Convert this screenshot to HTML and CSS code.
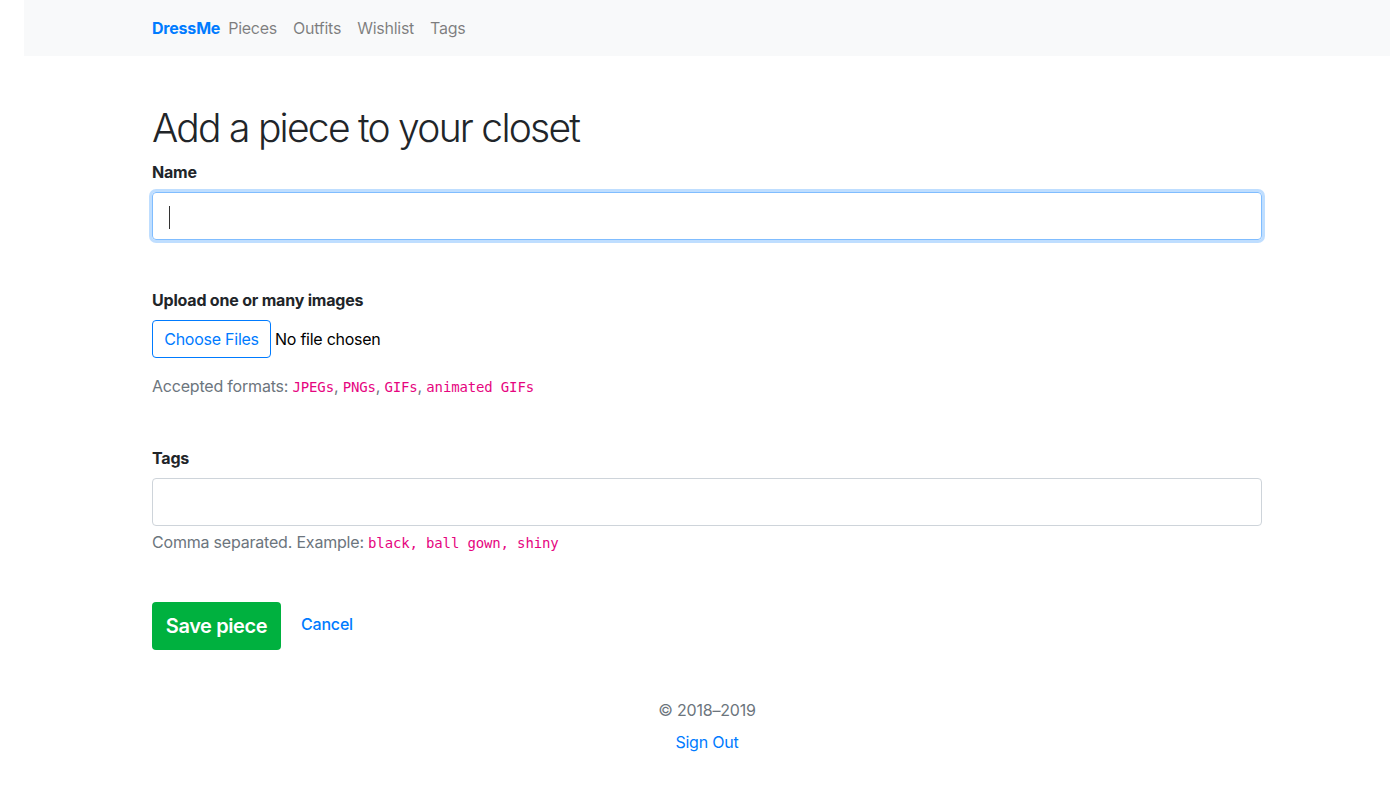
FILE: index.html
```html
<!DOCTYPE html>
<html lang="en">
<head>
<meta charset="utf-8">
<title>DressMe</title>
<link rel="stylesheet" href="styles.css">
</head>
<body>
<div class="page">
  <nav class="navbar">
    <div class="container nav-inner">
      <a class="brand" href="#">DressMe</a>
      <a class="nav-link" href="#">Pieces</a>
      <a class="nav-link" href="#">Outfits</a>
      <a class="nav-link" href="#">Wishlist</a>
      <a class="nav-link" href="#">Tags</a>
    </div>
  </nav>
  <main class="container main">
    <h1 class="title">Add a piece to your closet</h1>
    <div class="form-group">
      <label class="label">Name</label>
      <div class="input input-focus"><span class="caret"></span></div>
    </div>
    <div class="form-group">
      <label class="label">Upload one or many images</label>
      <div class="file-row">
        <span class="file-btn">Choose Files</span>
        <span class="file-text">No file chosen</span>
      </div>
      <p class="help help-upload">Accepted formats: <code>JPEGs</code>, <code>PNGs</code>, <code>GIFs</code>, <code>animated GIFs</code></p>
    </div>
    <div class="form-group">
      <label class="label">Tags</label>
      <div class="input"></div>
      <p class="help">Comma separated. Example: <code>black, ball gown, shiny</code></p>
    </div>
    <div class="actions">
      <a class="btn-save" href="#">Save piece</a>
      <a class="cancel" href="#">Cancel</a>
    </div>
  </main>
  <footer class="footer">
    <div class="copy">© 2018–2019</div>
    <a class="signout" href="#">Sign Out</a>
  </footer>
</div>
</body>
</html>
```
FILE: styles.css
```css
* { box-sizing: border-box; }
html, body { margin: 0; padding: 0; background: #fff; }
body {
  font-family: "Inter", "Liberation Sans", sans-serif;
  font-size: 16px;
  line-height: 24px;
  color: #212529;
}
a { text-decoration: none; }
.page { margin-left: 24px; }
.container { width: 1140px; margin: 0 auto; padding: 0 15px; }
.navbar { background: #f8f9fa; height: 56px; }
.nav-inner { display: flex; align-items: center; height: 56px; }
.brand { color: #007bff; font-weight: 700; font-size: 16px; margin-right: 0; letter-spacing: -0.2px; }
.nav-link { color: rgba(0,0,0,0.5); padding: 0 8px; font-size: 16px; letter-spacing: -0.25px; }
.main { padding-top: 48px; }
.title { margin: 0 0 8px; font-size: 39px; line-height: 48px; font-weight: 300; letter-spacing: -1.75px; }
.form-group { margin-bottom: 48px; }
.label { display: block; font-weight: 700; margin-bottom: 8px; letter-spacing: -0.2px; }
.input { height: 48px; border: 1px solid #ced4da; border-radius: 4px; display: flex; align-items: center; padding-left: 16px; }
.input-focus { border-color: #80bdff; box-shadow: 0 0 0 3px rgba(0,123,255,0.25); }
.caret { display: block; width: 1px; height: 23px; background: #333; margin-top: 2px; }
.file-row { display: flex; align-items: center; gap: 4px; }
.file-btn { display: inline-flex; align-items: center; justify-content: center; height: 38px; width: 119px; border: 1px solid #007bff; border-radius: 4px; color: #007bff; letter-spacing: -0.25px; }
.file-text { color: #000; letter-spacing: -0.25px; }
.help { margin: 4px 0 0; color: #6c757d; letter-spacing: -0.2px; line-height: 24px; height: 24px; }
.help-upload { margin-top: 16px; }
code { font-family: "DejaVu Sans Mono", "Liberation Mono", monospace; font-size: 14px; line-height: 1; color: #e6057f; letter-spacing: -0.15px; }
.actions { display: flex; align-items: center; gap: 20px; }
.btn-save { display: inline-flex; align-items: center; justify-content: center; width: 129px; height: 48px; background: #00b13f; color: #fff; border-radius: 4px; font-size: 20px; font-weight: 600; letter-spacing: -0.4px; }
.cancel { color: #007bff; font-weight: 500; letter-spacing: -0.2px; margin-top: -4px; }
.footer { display: flex; flex-direction: column; align-items: center; padding-top: 48px; gap: 8px; }
.copy { color: #6c757d; letter-spacing: -0.2px; }
.signout { color: #007bff; letter-spacing: -0.2px; }
```
